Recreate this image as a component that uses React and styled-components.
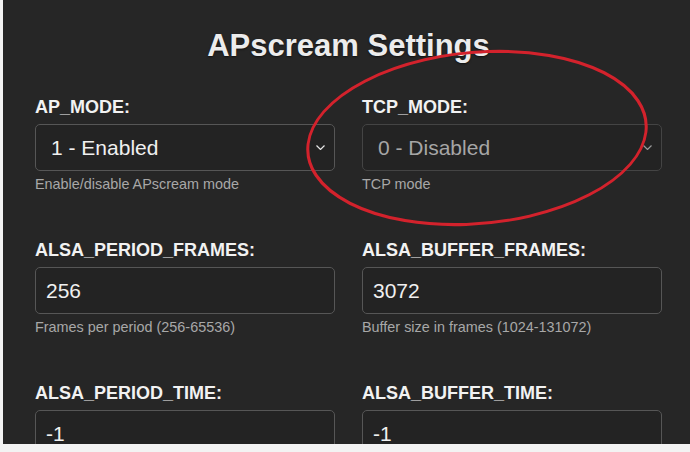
import React from "react";
import styled, { createGlobalStyle } from "styled-components";

const GlobalStyle = createGlobalStyle`
  html, body {
    margin: 0;
    padding: 0;
    background: #f3f3f3;
  }
  body {
    font-family: "Liberation Sans", Arial, Helvetica, sans-serif;
  }
`;

const Page = styled.div`
  position: relative;
  margin-left: 3px;
  height: 444px;
  overflow: hidden;
  background: #262626;
  padding: 0 28px 0 32px;
  color: #eeeeee;
`;

const Title = styled.h1`
  margin: 0;
  padding-top: 27px;
  font-size: 31px;
  line-height: 38px;
  font-weight: 700;
  text-align: center;
  color: #ececec;
  text-shadow: 0 1px 2px rgba(0, 0, 0, 0.6);
`;

const Grid = styled.div`
  display: grid;
  grid-template-columns: 300px 300px;
  column-gap: 27px;
  row-gap: 46px;
  margin-top: 31px;
`;

const Field = styled.div`
  display: flex;
  flex-direction: column;
`;

const Label = styled.label`
  font-size: 18px;
  line-height: 22px;
  font-weight: 700;
  color: #f2f2f2;
  margin-bottom: 6px;
`;

const boxBase = `
  box-sizing: border-box;
  height: 47px;
  border-radius: 5px;
  background: #232323;
  font-family: "Liberation Sans", Arial, Helvetica, sans-serif;
  font-size: 21px;
`;

const SelectBox = styled.div`
  ${boxBase}
  display: flex;
  align-items: center;
  justify-content: space-between;
  padding: 0 9px 0 15px;
  border: 1px solid ${(p) => (p.disabled ? "#444" : "#565656")};
  color: ${(p) => (p.disabled ? "#a6a6a6" : "#f0f0f0")};
`;

const Chevron = styled.svg`
  width: 9px;
  height: 5px;
  flex: none;
  stroke: ${(p) => (p.disabled ? "#9a9a9a" : "#e6e6e6")};
`;

const TextInput = styled.input`
  ${boxBase}
  width: 100%;
  padding: 0 10px;
  border: 1px solid #565656;
  color: #f0f0f0;
  outline: none;
`;

const Help = styled.div`
  margin-top: 4px;
  font-size: 14.4px;
  line-height: 18px;
  color: #a8a8a8;
`;

// hand-drawn ring laid over the form
const Mark = styled.svg`
  position: absolute;
  left: 0;
  top: 0;
  width: 100%;
  height: 100%;
  pointer-events: none;
`;

const fields = [
  { name: "AP_MODE", type: "select", value: "1 - Enabled", help: "Enable/disable APscream mode" },
  { name: "TCP_MODE", type: "select", value: "0 - Disabled", help: "TCP mode", disabled: true },
  { name: "ALSA_PERIOD_FRAMES", value: "256", help: "Frames per period (256-65536)" },
  { name: "ALSA_BUFFER_FRAMES", value: "3072", help: "Buffer size in frames (1024-131072)" },
  { name: "ALSA_PERIOD_TIME", value: "-1", help: "" },
  { name: "ALSA_BUFFER_TIME", value: "-1", help: "" },
];

const SettingField = ({ field }) => (
  <Field>
    <Label>{field.name}:</Label>
    {field.type === "select" ? (
      <SelectBox disabled={field.disabled}>
        <span>{field.value}</span>
        <Chevron disabled={field.disabled} viewBox="0 0 9 5" fill="none" strokeWidth="1.2">
          <path d="M0.5 0.5 L4.5 4.5 L8.5 0.5" />
        </Chevron>
      </SelectBox>
    ) : (
      <TextInput defaultValue={field.value} />
    )}
    {field.help && <Help>{field.help}</Help>}
  </Field>
);

export default function App() {
  return (
    <>
      <GlobalStyle />
      <Page>
        <Title>APscream Settings</Title>
        <Grid>
          {fields.map((f) => (
            <SettingField key={f.name} field={f} />
          ))}
        </Grid>
        <Mark viewBox="0 0 687 444">
          <ellipse
            cx="0"
            cy="0"
            rx="169"
            ry="86"
            transform="translate(474 138) rotate(-2) skewX(-9)"
            fill="none"
            stroke="#d3222c"
            strokeWidth="3"
          />
        </Mark>
      </Page>
    </>
  );
}
